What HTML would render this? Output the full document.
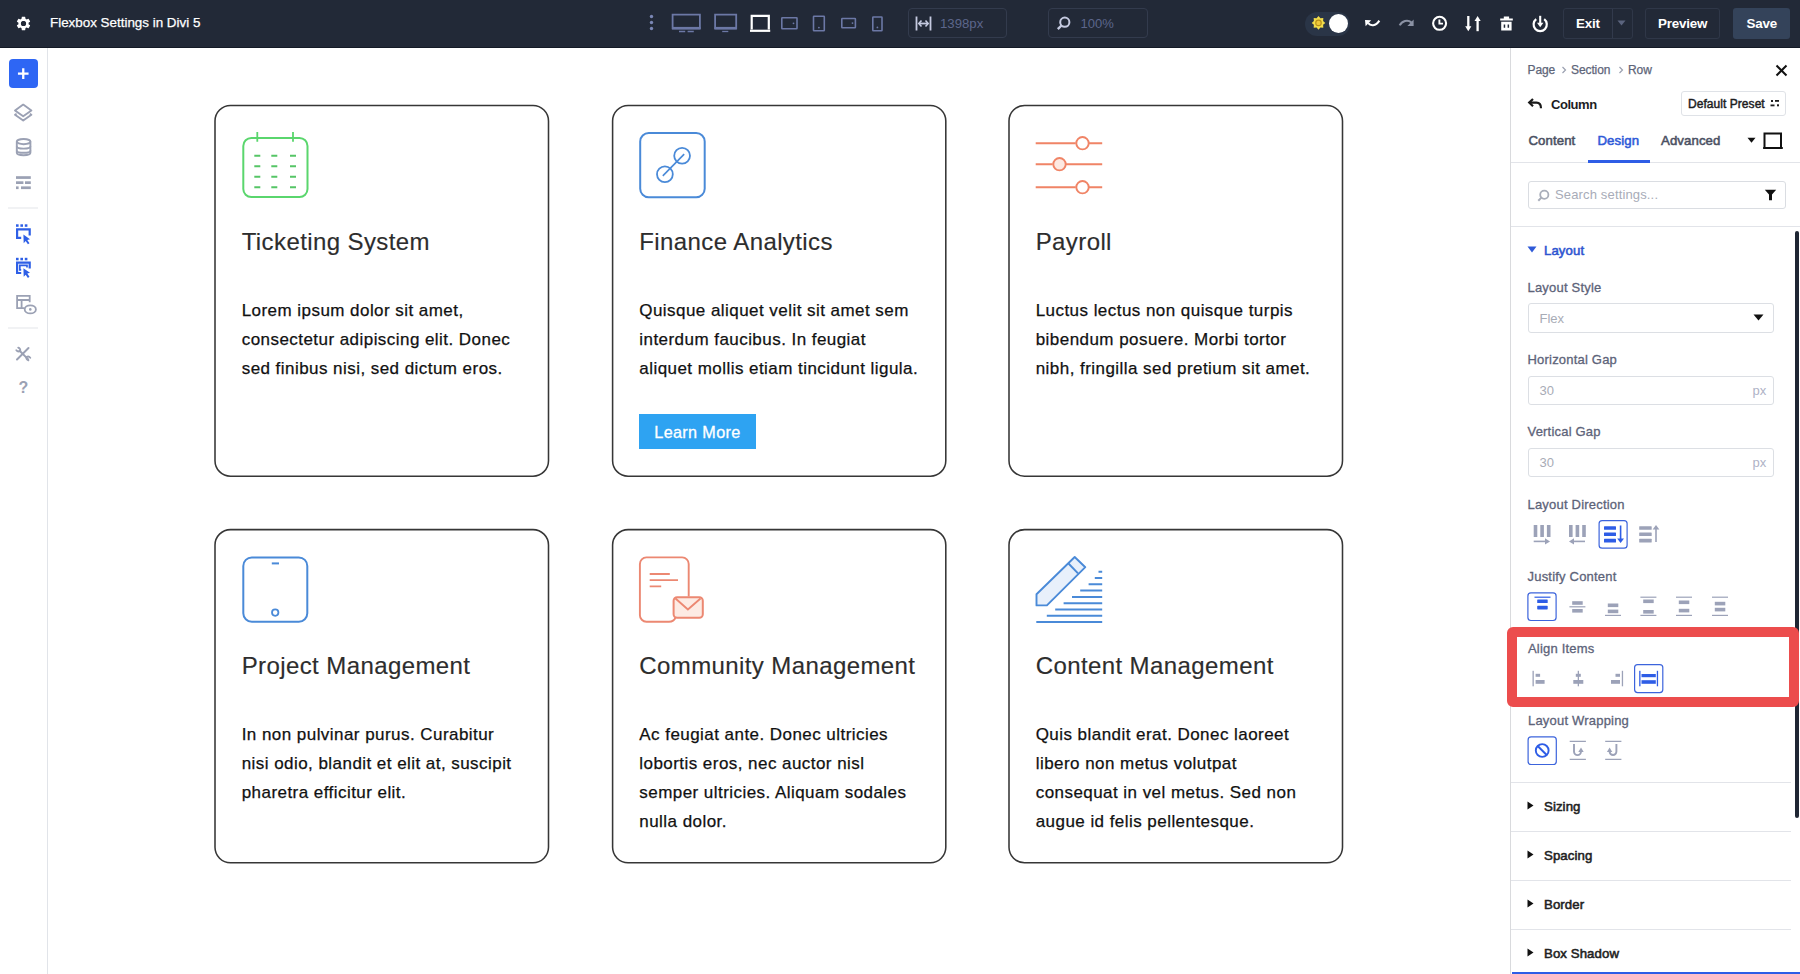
<!DOCTYPE html>
<html><head><meta charset="utf-8">
<style>
*{box-sizing:border-box;margin:0;padding:0}
html,body{width:1800px;height:974px;overflow:hidden;background:#fff;font-family:"Liberation Sans",sans-serif;position:relative}
.abs{position:absolute}
#top{position:absolute;left:0;top:0;width:1800px;height:48px;background:#222937;z-index:2}
#side{position:absolute;left:0;top:48px;width:48px;height:926px;background:#fff;border-right:1px solid #e1e4e9}
#panel{position:absolute;left:1510px;top:48px;width:290px;height:926px;background:#fff;border-left:1px solid #d9dadd}
.tbox{border:1.5px solid #333b4d;border-radius:4px}
.tbox2{border:1.5px solid #2f3748;border-radius:3px}
.tlbl{font-size:13.4px;line-height:16px;color:#fff;font-weight:700;letter-spacing:-0.2px}
.card{position:absolute;width:335px;border:1.6px solid transparent;border-radius:16px;background:#fff}
.card h3{position:absolute;left:26.5px;font-weight:400;font-size:24px;line-height:28px;letter-spacing:0.4px;color:#2d2d2d;-webkit-text-stroke:0.15px #2d2d2d;white-space:nowrap}
.card p{position:absolute;left:26.5px;font-size:17px;line-height:29px;letter-spacing:0.45px;color:#111;white-space:nowrap;-webkit-text-stroke:0.25px #111}
.btn{position:absolute;width:117px;height:35px;background:#2ea3f2;color:#fff;font-size:16.2px;line-height:36.5px;padding-left:15px;letter-spacing:0.35px;-webkit-text-stroke:0.3px #fff}
.crumb{font-size:12px;line-height:14px;color:#5e6579;letter-spacing:-0.1px;-webkit-text-stroke:0.25px #5e6579}
.tab{font-size:13.2px;line-height:16px;font-weight:400;letter-spacing:0.1px;-webkit-text-stroke:0.55px currentColor}
.sect{font-size:13.2px;line-height:16px;font-weight:400;color:#222;letter-spacing:0.1px;-webkit-text-stroke:0.55px currentColor}
.lbl{font-size:13px;line-height:16px;color:#5d6379;letter-spacing:0.2px;-webkit-text-stroke:0.3px #5d6379}
.inp{border:1px solid #dcdfe4;border-radius:3px}
.ph{font-size:13px;line-height:16px;color:#a8acb6}
</style></head><body>
<div id="side"></div>
<div id="panel"></div>
<!-- TOP BAR -->
<div id="top">
  <svg class="abs" style="left:15px;top:15px" width="17" height="17" viewBox="0 0 24 24"><path fill="#fff" d="M19.14 12.94c.04-.3.06-.61.06-.94 0-.32-.02-.64-.07-.94l2.03-1.58a.49.49 0 0 0 .12-.61l-1.92-3.32a.488.488 0 0 0-.59-.22l-2.39.96c-.5-.38-1.03-.7-1.62-.94l-.36-2.54a.484.484 0 0 0-.48-.41h-3.84c-.24 0-.43.17-.47.41l-.36 2.54c-.59.24-1.13.57-1.62.94l-2.39-.96a.48.48 0 0 0-.59.22L2.74 8.87c-.12.21-.08.47.12.61l2.03 1.58c-.05.3-.09.63-.09.94s.02.64.07.94l-2.03 1.58a.49.49 0 0 0-.12.61l1.92 3.32c.12.22.37.29.59.22l2.39-.96c.5.38 1.03.7 1.62.94l.36 2.54c.05.24.24.41.48.41h3.84c.24 0 .44-.17.47-.41l.36-2.54c.59-.24 1.13-.56 1.62-.94l2.39.96c.22.08.47 0 .59-.22l1.92-3.32c.12-.22.07-.47-.12-.61l-2.01-1.58zM12 15.6c-1.98 0-3.6-1.62-3.6-3.6s1.62-3.6 3.6-3.6 3.6 1.62 3.6 3.6-1.62 3.6-3.6 3.6z"/><circle cx="12" cy="12" r="3.6" fill="#222937"/></svg>
  <div class="abs" style="left:50px;top:15px;font-size:13.4px;line-height:16px;color:#fff;-webkit-text-stroke:0.25px #fff">Flexbox Settings in Divi 5</div>

  <!-- dots -->
  <svg class="abs" style="left:648px;top:14px" width="7" height="18" viewBox="0 0 7 18"><circle cx="3.5" cy="2.5" r="1.7" fill="#7a86b4"/><circle cx="3.5" cy="8.5" r="1.7" fill="#7a86b4"/><circle cx="3.5" cy="14.5" r="1.7" fill="#7a86b4"/></svg>
  <!-- device icons -->
  <svg class="abs" style="left:0;top:0" width="900" height="48" viewBox="0 0 900 48" fill="none" stroke="#6c78a6" stroke-width="1.8">
    <path d="M672.6 28.3V14.7h27.3v13.6z"/>
    <path d="M672 28.2h28.5" stroke-width="2.6"/>
    <path d="M679 31.5h6.2M687.6 31.5h6.2" stroke-width="1.3"/>
    <path d="M715.1 28.3V14.7h21.1v13.6z"/>
    <path d="M714.5 28.2h22.3" stroke-width="2.6"/>
    <path d="M722.2 31.5h6.1" stroke-width="1.3"/>
    <path d="M751.7 29.5V15.8h17.1v13.7" stroke="#fff" stroke-width="2.2"/>
    <path d="M750 30.8h20.2" stroke="#fff" stroke-width="2.2"/>
    <rect x="781.8" y="17.8" width="15.2" height="11" rx="0.5" stroke-width="1.6"/>
    <circle cx="793.5" cy="23.3" r="0.9" fill="#6c78a6" stroke="none"/>
    <rect x="813.5" y="16.2" width="10.8" height="14.6" rx="0.5" stroke-width="1.6"/>
    <circle cx="818.9" cy="27.6" r="0.9" fill="#6c78a6" stroke="none"/>
    <rect x="841.8" y="18.5" width="13.6" height="9.2" rx="0.5" stroke-width="1.6"/>
    <circle cx="852.5" cy="23.1" r="0.9" fill="#6c78a6" stroke="none"/>
    <rect x="872.8" y="17" width="9.2" height="13.8" rx="0.5" stroke-width="1.6"/>
    <circle cx="877.4" cy="27.4" r="0.9" fill="#6c78a6" stroke="none"/>
  </svg>
  <!-- width box -->
  <div class="abs tbox" style="left:908px;top:8px;width:99px;height:30px"></div>
  <svg class="abs" style="left:915px;top:15px" width="17" height="17" viewBox="0 0 17 17" fill="none" stroke="#c5cae0" stroke-width="1.8"><path d="M1.5 1.5v14M15.5 1.5v14"/><path d="M4 8.5h9" /><path d="M6.5 5.5L3.8 8.5l2.7 3M10.5 5.5l2.7 3-2.7 3" stroke-width="1.6"/></svg>
  <div class="abs" style="left:940px;top:15.5px;font-size:13.2px;line-height:16px;color:#5c668b">1398px</div>
  <!-- zoom box -->
  <div class="abs tbox" style="left:1048px;top:8px;width:100px;height:30px"></div>
  <svg class="abs" style="left:1056px;top:16px" width="16" height="15" viewBox="0 0 16 15" fill="none" stroke="#c5cae0" stroke-width="2"><circle cx="8.8" cy="6.2" r="4.6"/><path d="M5.5 9.5L1.8 13.2" stroke-width="2.4"/></svg>
  <div class="abs" style="left:1080.5px;top:15.5px;font-size:13px;line-height:16px;color:#5c668b">100%</div>

  <!-- toggle -->
  <div class="abs" style="left:1305px;top:11.5px;width:45px;height:24px;border-radius:12px;background:#2a3547"></div>
  <svg class="abs" style="left:0;top:0" width="1340" height="48" viewBox="0 0 1340 48"><polygon points="1318.50,16.10 1320.41,18.28 1323.31,18.09 1323.12,20.99 1325.30,22.90 1323.12,24.81 1323.31,27.71 1320.41,27.52 1318.50,29.70 1316.59,27.52 1313.69,27.71 1313.88,24.81 1311.70,22.90 1313.88,20.99 1313.69,18.09 1316.59,18.28" fill="#f2dc4a"/><circle cx="1318.5" cy="22.9" r="3.3" fill="#b8901a"/><circle cx="1318.5" cy="22.9" r="2.2" fill="#f0c93a"/></svg>
  <div class="abs" style="left:1328.5px;top:13.5px;width:19.3px;height:19.3px;border-radius:50%;background:#fff"></div>
  <!-- undo/redo -->
  <svg class="abs" style="left:0;top:0" width="1420" height="48" viewBox="0 0 1420 48">
    <path d="M1368.2 23.2c2.2 2.8 7.5 3.4 11.1-2.6" fill="none" stroke="#fff" stroke-width="2.1"/>
    <path d="M1365 20l6.2 0.2-5.6 6z" fill="#fff"/>
    <path d="M1399.7 25.4c2.2-4.6 8-6.2 11.6-3" fill="none" stroke="#8b92a4" stroke-width="2.1"/>
    <path d="M1413.6 19.4v6.5h-6.2z" fill="#8b92a4"/>
  </svg>
  <!-- clock -->
  <svg class="abs" style="left:0;top:0" width="1560" height="48" viewBox="0 0 1560 48">
    <circle cx="1439.6" cy="23.3" r="6.5" fill="none" stroke="#fff" stroke-width="2.1"/>
    <path d="M1439.4 19.6v4h3.6" fill="none" stroke="#fff" stroke-width="1.9"/>
    <path d="M1468.3 16v11" stroke="#fff" stroke-width="2.3"/>
    <path d="M1465.2 26.2h6.2l-3.1 5z" fill="#fff"/>
    <path d="M1477.6 31.2v-11" stroke="#fff" stroke-width="2.3"/>
    <path d="M1474.5 21h6.2l-3.1-5z" fill="#fff"/>
    <path d="M1503.8 16.4h5.3v2.4h-5.3z M1500.2 18.6h12.6v1.8h-12.6z M1501.2 21.8h10.4v8.8h-10.4z" fill="#fff"/>
    <path d="M1503.7 24.6h1.5v3.2h-1.5zM1507.6 24.6h1.5v3.2h-1.5z" fill="#222937"/>
    <path d="M1536.2 19.2a6.6 6.6 0 1 0 8 0" fill="none" stroke="#fff" stroke-width="2.2"/>
    <path d="M1540.2 15.8v8.5" stroke="#fff" stroke-width="2.1"/>
    <path d="M1537 22.8h6.4l-3.2 4.4z" fill="#fff"/>
  </svg>
  <!-- buttons -->
  <div class="abs tbox2" style="left:1563px;top:8px;width:70px;height:31px"></div>
  <div class="abs" style="left:1611.5px;top:9px;width:1px;height:29px;background:#323a4c"></div>
  <div class="abs tlbl" style="left:1576px;top:15.5px">Exit</div>
  <svg class="abs" style="left:1617px;top:20px" width="9" height="6" viewBox="0 0 9 6"><path d="M0.5 0.5h8L4.5 5.5z" fill="#5b647e"/></svg>
  <div class="abs tbox2" style="left:1645px;top:8px;width:75px;height:31px"></div>
  <div class="abs tlbl" style="left:1658px;top:15.5px">Preview</div>
  <div class="abs" style="left:1732.5px;top:8px;width:57.5px;height:31px;background:#34435a;border-radius:3px"></div>
  <div class="abs tlbl" style="left:1746.5px;top:15.5px">Save</div>
  <div class="abs" style="left:0;top:47px;width:1800px;height:1px;background:#141a26"></div>
</div>
<!-- SIDEBAR (page coords) -->
<div class="abs" style="left:8.5px;top:59px;width:29.5px;height:29px;border-radius:4px;background:#2e66f4"></div>
<svg class="abs" style="left:0;top:48px" width="48" height="360" viewBox="0 48 48 360">
  <path d="M23.25 68.3v10.6M17.95 73.6h10.6" stroke="#fff" stroke-width="2.3"/>
  <g fill="none" stroke="#9ba1b4" stroke-width="1.9" stroke-linejoin="round">
    <path d="M23.2 104.6l8.2 5.9-8.2 5.7-8.2-5.7z"/>
    <path d="M16.6 113.7l-1.6 1 8.2 5.9 8.2-5.9-1.6-1"/>
    <ellipse cx="23.6" cy="141.6" rx="6.8" ry="2.6"/>
    <path d="M16.8 141.6v11.2c0 1.5 3 2.4 6.8 2.4s6.8-.9 6.8-2.4V141.6"/>
    <path d="M16.8 146.2c0 1.4 3 2.4 6.8 2.4s6.8-1 6.8-2.4M16.8 150.4c0 1.4 3 2.4 6.8 2.4s6.8-1 6.8-2.4"/>
  </g>
  <g fill="#9ba1b4">
    <rect x="16" y="176.2" width="14.8" height="2.7"/>
    <rect x="16" y="181.3" width="7.4" height="2.7"/><rect x="25" y="181.3" width="5.8" height="2.7"/>
    <rect x="16" y="186.4" width="2.6" height="2.7"/><rect x="21" y="186.4" width="9.8" height="2.7"/>
  </g>
  <rect x="8" y="207.5" width="30" height="1" fill="#e3e5ea"/>
  <g fill="#2e5fe6">
    <rect x="16" y="224.3" width="2.6" height="2.5"/><rect x="20.4" y="224.3" width="2.6" height="2.5"/><rect x="24.8" y="224.3" width="2.6" height="2.5"/>
    <path d="M23.4 234.6l6.6 4.6-2.7.8 2.2 3.2-1.6 1.1-2.2-3.2-2 2.1z"/>
    <rect x="16" y="257.8" width="2.6" height="2.5"/><rect x="20.4" y="257.8" width="2.6" height="2.5"/><rect x="24.8" y="257.8" width="2.6" height="2.5"/>
    <path d="M23.4 268.2l6.6 4.6-2.7.8 2.2 3.2-1.6 1.1-2.2-3.2-2 2.1z"/>
  </g>
  <g fill="none" stroke="#2e5fe6" stroke-width="2.2">
    <path d="M21.2 237.8H17.1V229.4h12.6v6"/>
    <path d="M21.2 273H17.1V262.6h12.6v6"/>
    <path d="M21.2 269.8h-1.4v-4.4h7.2v2" stroke-width="1.7"/>
  </g>
  <g fill="none" stroke="#9ba1b4" stroke-width="1.8">
    <path d="M24.5 308.2H17.1V295.8h12.6v6.4"/>
    <path d="M17.1 300h12.6M21.6 300v8.2"/>
    <ellipse cx="30.3" cy="309.4" rx="5.6" ry="4" fill="#fff"/>
  </g>
  <circle cx="30.3" cy="309.4" r="1.3" fill="#9ba1b4"/>
  <rect x="8" y="327.5" width="30" height="1" fill="#e3e5ea"/>
  <g fill="none" stroke="#9ba1b4" stroke-width="2" stroke-linecap="round">
    <path d="M17 359.5l11.5-11.5"/>
    <path d="M19.6 350.8l8.6 8.6"/>
    <path d="M16.3 350.3a3 3 0 0 0 3.6 0.8M18.2 347.6a3 3 0 0 1 2.1 3" stroke-width="1.8"/>
    <path d="M30.3 357.7a3 3 0 0 0-3.6-0.8M28.4 360.4a3 3 0 0 1-2.1-3" stroke-width="1.8"/>
  </g>
</svg>
<div class="abs" style="left:18.5px;top:380px;font-size:16px;line-height:16px;font-weight:700;color:#9ba1b4">?</div>
<!-- CARDS -->
<div class="card" style="left:214.2px;top:104.7px;height:373.3px;width:335.1px">
  <h3 style="top:122px">Ticketing System</h3>
  <p style="top:190.4px">Lorem ipsum dolor sit amet,<br>consectetur adipiscing elit. Donec<br>sed finibus nisi, sed dictum eros.</p>
</div>
<div class="card" style="left:611.8px;top:104.7px;height:373.3px;width:334.8px">
  <h3 style="top:122px">Finance Analytics</h3>
  <p style="top:190.4px">Quisque aliquet velit sit amet sem<br>interdum faucibus. In feugiat<br>aliquet mollis etiam tincidunt ligula.</p>
  <div class="btn" style="left:26.5px;top:308.2px">Learn More</div>
</div>
<div class="card" style="left:1008.2px;top:104.7px;height:373.3px;width:335.1px">
  <h3 style="top:122px">Payroll</h3>
  <p style="top:190.4px">Luctus lectus non quisque turpis<br>bibendum posuere. Morbi tortor<br>nibh, fringilla sed pretium sit amet.</p>
</div>
<div class="card" style="left:214.2px;top:528.8px;height:334.8px;width:335.1px">
  <h3 style="top:122px">Project Management</h3>
  <p style="top:190.4px">In non pulvinar purus. Curabitur<br>nisi odio, blandit et elit at, suscipit<br>pharetra efficitur elit.</p>
</div>
<div class="card" style="left:611.8px;top:528.8px;height:334.8px;width:334.8px">
  <h3 style="top:122px">Community Management</h3>
  <p style="top:190.4px">Ac feugiat ante. Donec ultricies<br>lobortis eros, nec auctor nisl<br>semper ultricies. Aliquam sodales<br>nulla dolor.</p>
</div>
<div class="card" style="left:1008.2px;top:528.8px;height:334.8px;width:335.1px">
  <h3 style="top:122px">Content Management</h3>
  <p style="top:190.4px">Quis blandit erat. Donec laoreet<br>libero non metus volutpat<br>consequat in vel metus. Sed non<br>augue id felis pellentesque.</p>
</div>

<svg id="cardlines" class="abs" style="left:0;top:0;z-index:1" width="1400" height="900" viewBox="0 0 1400 900" fill="none" stroke="#363636" stroke-width="1.55">
  <rect x="215" y="105.5" width="333.5" height="370.7" rx="15.5"/>
  <rect x="612.6" y="105.5" width="333.2" height="370.7" rx="15.5"/>
  <rect x="1009" y="105.5" width="333.5" height="370.7" rx="15.5"/>
  <rect x="215" y="529.6" width="333.5" height="333.2" rx="15.5"/>
  <rect x="612.6" y="529.6" width="333.2" height="333.2" rx="15.5"/>
  <rect x="1009" y="529.6" width="333.5" height="333.2" rx="15.5"/>
</svg>
<!-- card icons (page coords) -->
<svg class="abs" style="left:230px;top:120px" width="90" height="90" viewBox="230 120 90 90" fill="none" stroke="#5ad66d" stroke-width="2">
  <rect x="243.3" y="137.9" width="64.2" height="59.2" rx="8"/>
  <path d="M257.3 132v9.8M293 132v9.8" stroke-width="1.8"/>
  <g stroke-width="2" stroke="#55c566">
  <path d="M254.3 155.7h6M271.3 155.7h6M290 155.7h6M254.3 166.2h6M271.3 166.2h6M290 166.2h6M254.3 176.7h6M271.3 176.7h6M290 176.7h6M254.3 187.2h6M271.3 187.2h6M290 187.2h6"/>
  </g>
</svg>
<svg class="abs" style="left:630px;top:120px" width="90" height="90" viewBox="630 120 90 90" fill="none" stroke="#4a8ad8" stroke-width="2">
  <rect x="640.2" y="133" width="64.5" height="64.2" rx="8.5"/>
  <circle cx="664.9" cy="174.3" r="7.9" stroke-width="1.8"/>
  <circle cx="682.1" cy="155.8" r="7.9" stroke-width="1.8"/>
  <path d="M662.8 175.9L684.2 154.1" stroke-width="1.6"/>
</svg>
<svg class="abs" style="left:1025px;top:120px" width="90" height="90" viewBox="1025 120 90 90" fill="none" stroke="#f08466" stroke-width="1.9">
  <path d="M1035.7 143.2h40M1089 143.2h13.2M1035.7 164.2h17M1066 164.2h36.2M1035.7 187.2h40M1089 187.2h13.2"/>
  <circle cx="1082.5" cy="143.2" r="6.2" fill="#fff"/>
  <circle cx="1059.5" cy="164.2" r="6.2" fill="#fde9e2"/>
  <circle cx="1082.5" cy="187.2" r="6.2" fill="#fff"/>
</svg>
<svg class="abs" style="left:230px;top:545px" width="90" height="90" viewBox="230 545 90 90" fill="none" stroke="#4a8ad8" stroke-width="2">
  <rect x="243.3" y="557.4" width="64" height="64.3" rx="8.5"/>
  <path d="M271.8 563.4h7.2" stroke-width="2"/>
  <circle cx="275.2" cy="612.6" r="3.2" stroke-width="1.8"/>
</svg>
<svg class="abs" style="left:630px;top:545px" width="90" height="90" viewBox="630 545 90 90" fill="none" stroke="#ec8872" stroke-width="2">
  <path d="M675.5 617.6q-1.6 4.1-6.5 4.1h-22.6a6.5 6.5 0 0 1-6.5-6.5V563.9a6.5 6.5 0 0 1 6.5-6.5h35.8a6.5 6.5 0 0 1 6.5 6.5v32.5" stroke-width="1.9"/>
  <path d="M649.7 574h20.1M649.7 580.2h28.3M649.7 586.4h11.5" stroke-width="1.8"/>
  <rect x="673.6" y="597.2" width="29.2" height="20.6" rx="3.5" fill="#fdebe4"/>
  <path d="M675.5 598.5l12.4 11 12.6-11" stroke-width="1.9"/>
</svg>
<svg class="abs" style="left:1025px;top:545px" width="90" height="90" viewBox="1025 545 90 90" fill="none" stroke="#4a8ad8" stroke-width="1.9">
  <path d="M1036.5 605.4v-11.1L1074.7 557l10.6 10.2-38.4 38.2z" fill="#e8f0fb" stroke-linejoin="round"/>
  <path d="M1068.5 563.5l9.5 9.9"/>
  <g stroke-width="2"><path d="M1098.5 571.8h3.7M1094.8 578.1h7.4M1088.6 584.3h13.6M1080.2 590.6h22M1072 597h30.2M1063.6 603.2h38.6M1055.2 609.4h47M1046.8 615.7h55.4M1036.3 622h65.9"/></g>
</svg>
<!-- PANEL (absolute page coords) -->
<div id="panelc">
  <div class="abs crumb" style="left:1527.5px;top:63px">Page</div>
  <svg class="abs" style="left:1561px;top:66px" width="6" height="8" viewBox="0 0 6 8" fill="none" stroke="#9aa0b0" stroke-width="1.2"><path d="M1.5 1l3 3-3 3"/></svg>
  <div class="abs crumb" style="left:1571px;top:63px">Section</div>
  <svg class="abs" style="left:1617.5px;top:66px" width="6" height="8" viewBox="0 0 6 8" fill="none" stroke="#9aa0b0" stroke-width="1.2"><path d="M1.5 1l3 3-3 3"/></svg>
  <div class="abs crumb" style="left:1628px;top:63px">Row</div>
  <svg class="abs" style="left:1775px;top:64px" width="13" height="13" viewBox="0 0 13 13" stroke="#111" stroke-width="2"><path d="M1.5 1.5l10 10M11.5 1.5l-10 10"/></svg>

  <svg class="abs" style="left:1527px;top:98px" width="16" height="12" viewBox="0 0 16 12" fill="none" stroke="#1a1a1a" stroke-width="2.2"><path d="M2.5 4.6h7c3 0 4.5 2 4.5 5.6"/><path d="M6 1L2.2 4.6 6 8.2"/></svg>
  <div class="abs" style="left:1551px;top:97px;font-size:13px;line-height:16px;color:#1d1d1f;font-weight:700;letter-spacing:-0.45px">Column</div>
  <div class="abs" style="left:1680.5px;top:91px;width:105.5px;height:24.5px;border:1px solid #dfe2e7;border-radius:3px"></div>
  <div class="abs" style="left:1688px;top:96.5px;font-size:12px;line-height:14px;color:#1d1d1f;font-weight:400;letter-spacing:0.05px;-webkit-text-stroke:0.45px #1d1d1f">Default Preset</div>
  <svg class="abs" style="left:1770px;top:99px" width="10" height="9" viewBox="0 0 10 9" fill="#1d1d1f"><rect x="1" y="1" width="2" height="2"/><rect x="5" y="1" width="4" height="1.8"/><rect x="0.5" y="5.5" width="4" height="1.8"/><rect x="7" y="5.3" width="2" height="2"/></svg>

  <div class="abs tab" style="left:1528.5px;top:133px;color:#4b5163">Content</div>
  <div class="abs tab" style="left:1597.5px;top:133px;color:#2f5ad8">Design</div>
  <div class="abs tab" style="left:1661px;top:133px;color:#4b5163">Advanced</div>
  <svg class="abs" style="left:1747px;top:137px" width="9" height="7" viewBox="0 0 9 7"><path d="M0.5 0.8h8L4.5 5.8z" fill="#111"/></svg>
  <svg class="abs" style="left:1762px;top:131.5px" width="22" height="18" viewBox="0 0 22 18" fill="none" stroke="#111" stroke-width="2"><path d="M2.5 1.5h16.5v14.5H2.5z"/><path d="M1 16h20" stroke-width="1.6"/></svg>
  <div class="abs" style="left:1511px;top:161.5px;width:289px;height:1px;background:#e2e4e9"></div>
  <div class="abs" style="left:1588px;top:160px;width:62px;height:3px;background:#2e5de6"></div>

  <div class="abs" style="left:1528px;top:180.5px;width:258px;height:28px;border:1px solid #dadde2;border-radius:3px"></div>
  <svg class="abs" style="left:1537px;top:188.5px" width="13" height="13" viewBox="0 0 13 13" fill="none" stroke="#a9aeba" stroke-width="1.8"><circle cx="7.3" cy="5.7" r="4.1"/><path d="M4.4 8.6L1.3 11.7" stroke-width="2"/></svg>
  <div class="abs" style="left:1555px;top:187px;font-size:13px;line-height:16px;color:#a8acb8;letter-spacing:0.15px">Search settings...</div>
  <svg class="abs" style="left:1763.5px;top:188.5px" width="13" height="12" viewBox="0 0 13 12"><path d="M0.8 0.8h11.4L8 5.5v5.7H5V5.5z" fill="#111"/></svg>
  <div class="abs" style="left:1511px;top:226px;width:289px;height:1px;background:#e2e4e9"></div>

  <div class="abs" style="left:1795px;top:231px;width:4px;height:587px;background:#1f2633;border-radius:2px"></div>

  <svg class="abs" style="left:1526.5px;top:246px" width="10" height="7" viewBox="0 0 10 7"><path d="M0.5 0.6h9L5 6.5z" fill="#2f5ad8"/></svg>
  <div class="abs sect" style="left:1544px;top:243px;color:#2f55d0">Layout</div>

  <div class="abs lbl" style="left:1527.5px;top:279.5px">Layout Style</div>
  <div class="abs inp" style="left:1527.5px;top:303px;width:246.5px;height:29.5px"></div>
  <div class="abs ph" style="left:1539.5px;top:310.5px">Flex</div>
  <svg class="abs" style="left:1753px;top:314px" width="11" height="7" viewBox="0 0 11 7"><path d="M0.5 0.6h10L5.5 6.6z" fill="#111"/></svg>

  <div class="abs lbl" style="left:1527.5px;top:351.5px">Horizontal Gap</div>
  <div class="abs inp" style="left:1527.5px;top:375.5px;width:246.5px;height:29.5px"></div>
  <div class="abs ph" style="left:1539.5px;top:382.5px">30</div>
  <div class="abs ph" style="left:1752.5px;top:382.5px;color:#aeb2c6">px</div>

  <div class="abs lbl" style="left:1527.5px;top:423.5px">Vertical Gap</div>
  <div class="abs inp" style="left:1527.5px;top:447.5px;width:246.5px;height:29.5px"></div>
  <div class="abs ph" style="left:1539.5px;top:454.5px">30</div>
  <div class="abs ph" style="left:1752.5px;top:454.5px;color:#aeb2c6">px</div>

  <div class="abs lbl" style="left:1527.5px;top:496.5px">Layout Direction</div>
  <svg class="abs" style="left:1520px;top:516px" width="160" height="36" viewBox="1520 516 160 36">
    <g fill="#9ca2b8">
      <rect x="1533.7" y="525" width="3.6" height="12"/><rect x="1540.3" y="525" width="3.6" height="12"/><rect x="1546.9" y="525" width="3.6" height="12"/>
      <rect x="1533.7" y="540.6" width="12" height="1.6"/><path d="M1545 538.2l5 3.2-5 3.2z"/>
      <rect x="1569" y="525" width="3.6" height="12"/><rect x="1575.6" y="525" width="3.6" height="12"/><rect x="1582.2" y="525" width="3.6" height="12"/>
      <rect x="1573" y="540.6" width="12" height="1.6"/><path d="M1574 538.2l-5 3.2 5 3.2z"/>
      <rect x="1639.2" y="526.3" width="12.5" height="3.4" rx="0.5"/><rect x="1639.2" y="532.5" width="12.5" height="3.4" rx="0.5"/><rect x="1639.2" y="538.8" width="12.5" height="3.6" rx="0.5"/>
      <rect x="1655.2" y="528" width="1.6" height="14"/><path d="M1652.6 529.5l3.4-4.5 3.4 4.5z"/>
    </g>
    <rect x="1599.1" y="520.6" width="28" height="27.6" rx="3" fill="none" stroke="#3c64dc" stroke-width="1.2"/>
    <g fill="#2e5de6">
      <rect x="1604" y="526.3" width="12" height="3.4" rx="0.5"/><rect x="1604" y="532.5" width="12" height="3.4" rx="0.5"/><rect x="1604" y="538.8" width="12" height="3.6" rx="0.5"/>
      <rect x="1619.8" y="525.5" width="1.6" height="14"/><path d="M1617.2 538.5l3.4 4.5 3.4-4.5z"/>
    </g>
  </svg>

  <div class="abs lbl" style="left:1527.5px;top:568.5px">Justify Content</div>
  <svg class="abs" style="left:1520px;top:588px" width="220" height="36" viewBox="1520 588 220 36">
    <rect x="1527.9" y="592.9" width="28.2" height="27.6" rx="3" fill="none" stroke="#3c64dc" stroke-width="1.2"/>
    <g fill="#2e5de6"><rect x="1534.5" y="596.6" width="16" height="1.2"/><rect x="1537.2" y="599.5" width="10.5" height="3.6" rx="0.6"/><rect x="1537.2" y="605.8" width="10.5" height="3.6" rx="0.6"/></g>
    <g fill="#9ca2b8">
      <rect x="1569.4" y="606.2" width="16" height="1.2"/><rect x="1572.2" y="601.2" width="10.5" height="3.6"/><rect x="1572.2" y="609" width="10.5" height="3.6"/>
      <rect x="1605" y="614.8" width="16" height="1.2"/><rect x="1607.8" y="603.5" width="10.5" height="3.6"/><rect x="1607.8" y="609.6" width="10.5" height="3.6"/>
      <rect x="1640.4" y="596.6" width="16" height="1.2"/><rect x="1640.4" y="614.8" width="16" height="1.2"/><rect x="1643.2" y="599.5" width="10.5" height="3.6"/><rect x="1643.2" y="610" width="10.5" height="3.6"/>
      <rect x="1676" y="596.6" width="16" height="1.2"/><rect x="1676" y="614.8" width="16" height="1.2"/><rect x="1678.8" y="600.5" width="10.5" height="3.6"/><rect x="1678.8" y="608.8" width="10.5" height="3.6"/>
      <rect x="1712" y="596.6" width="16" height="1.2"/><rect x="1712" y="614.8" width="16" height="1.2"/><rect x="1714.8" y="601.8" width="10.5" height="3.6"/><rect x="1714.8" y="607.8" width="10.5" height="3.6"/>
    </g>
  </svg>

  <!-- red highlight -->
  <div class="abs" style="left:1506.5px;top:626.5px;width:292px;height:80.3px;border:10px solid #ec4d4d;border-radius:6px"></div>
  <div class="abs lbl" style="left:1528px;top:640.5px">Align Items</div>
  <svg class="abs" style="left:1520px;top:660px" width="150" height="36" viewBox="1520 660 150 36">
    <g fill="#9ca2b8">
      <rect x="1532.5" y="670.8" width="1.3" height="15.5"/><rect x="1535.6" y="673.8" width="4.5" height="3"/><rect x="1535.6" y="680" width="9" height="3.8"/>
      <rect x="1577.7" y="670.8" width="1.3" height="15.5"/><rect x="1575.8" y="673.8" width="5" height="3"/><rect x="1573.3" y="680" width="10" height="3.8"/>
      <rect x="1621.8" y="670.8" width="1.3" height="15.5"/><rect x="1615.5" y="673.8" width="4.5" height="3"/><rect x="1611" y="680" width="9" height="3.8"/>
    </g>
    <rect x="1634.6" y="664.6" width="28.2" height="28" rx="3" fill="none" stroke="#3c64dc" stroke-width="1.2"/>
    <g fill="#2e5de6"><rect x="1639.2" y="670.8" width="1.3" height="15.5"/><rect x="1656.8" y="670.8" width="1.3" height="15.5"/><rect x="1641.5" y="674" width="14.3" height="3.2"/><rect x="1641.5" y="680.2" width="14.3" height="3.6"/></g>
  </svg>

  <div class="abs lbl" style="left:1528px;top:712.5px">Layout Wrapping</div>
  <svg class="abs" style="left:1520px;top:732px" width="110" height="36" viewBox="1520 732 110 36">
    <rect x="1528.1" y="736.9" width="28.2" height="27.6" rx="3" fill="none" stroke="#3c64dc" stroke-width="1.2"/>
    <circle cx="1542.2" cy="750.5" r="6.4" fill="none" stroke="#2e5de6" stroke-width="1.9"/><path d="M1537.7 746l9 9" stroke="#2e5de6" stroke-width="1.9"/>
    <g fill="none" stroke="#9ca2b8" stroke-width="1.3">
      <path d="M1569.7 741.3h16.2M1569.7 759.3h16.2"/>
      <path d="M1574 744v7.6a3.5 3.5 0 0 0 7 0v-1" stroke-width="1.9"/>
      <path d="M1605.2 741.3h16.2M1605.2 759.3h16.2"/>
      <path d="M1616.4 744v7.6a3.4 3.4 0 0 1-6.8 0v-1" stroke-width="1.9"/>
    </g>
    <path d="M1578.3 752h5.4l-2.7-4.6z" fill="#9ca2b8"/>
    <path d="M1606.9 752h5.4l-2.7-4.6z" fill="#9ca2b8"/>
  </svg>

  <div class="abs" style="left:1511px;top:782px;width:280px;height:1px;background:#e2e4e9"></div>
  <svg class="abs" style="left:1527px;top:801px" width="7" height="9" viewBox="0 0 7 9"><path d="M0.5 0.5v8l6-4z" fill="#111"/></svg>
  <div class="abs sect" style="left:1544px;top:799px">Sizing</div>
  <div class="abs" style="left:1511px;top:831px;width:280px;height:1px;background:#e2e4e9"></div>
  <svg class="abs" style="left:1527px;top:850px" width="7" height="9" viewBox="0 0 7 9"><path d="M0.5 0.5v8l6-4z" fill="#111"/></svg>
  <div class="abs sect" style="left:1544px;top:848px">Spacing</div>
  <div class="abs" style="left:1511px;top:880px;width:280px;height:1px;background:#e2e4e9"></div>
  <svg class="abs" style="left:1527px;top:899px" width="7" height="9" viewBox="0 0 7 9"><path d="M0.5 0.5v8l6-4z" fill="#111"/></svg>
  <div class="abs sect" style="left:1544px;top:897px">Border</div>
  <div class="abs" style="left:1511px;top:929px;width:280px;height:1px;background:#e2e4e9"></div>
  <svg class="abs" style="left:1527px;top:948px" width="7" height="9" viewBox="0 0 7 9"><path d="M0.5 0.5v8l6-4z" fill="#111"/></svg>
  <div class="abs sect" style="left:1544px;top:946px">Box Shadow</div>
  <div class="abs" style="left:1512px;top:971.5px;width:288px;height:2.5px;background:#2e5de6"></div>
</div>
</body></html>
